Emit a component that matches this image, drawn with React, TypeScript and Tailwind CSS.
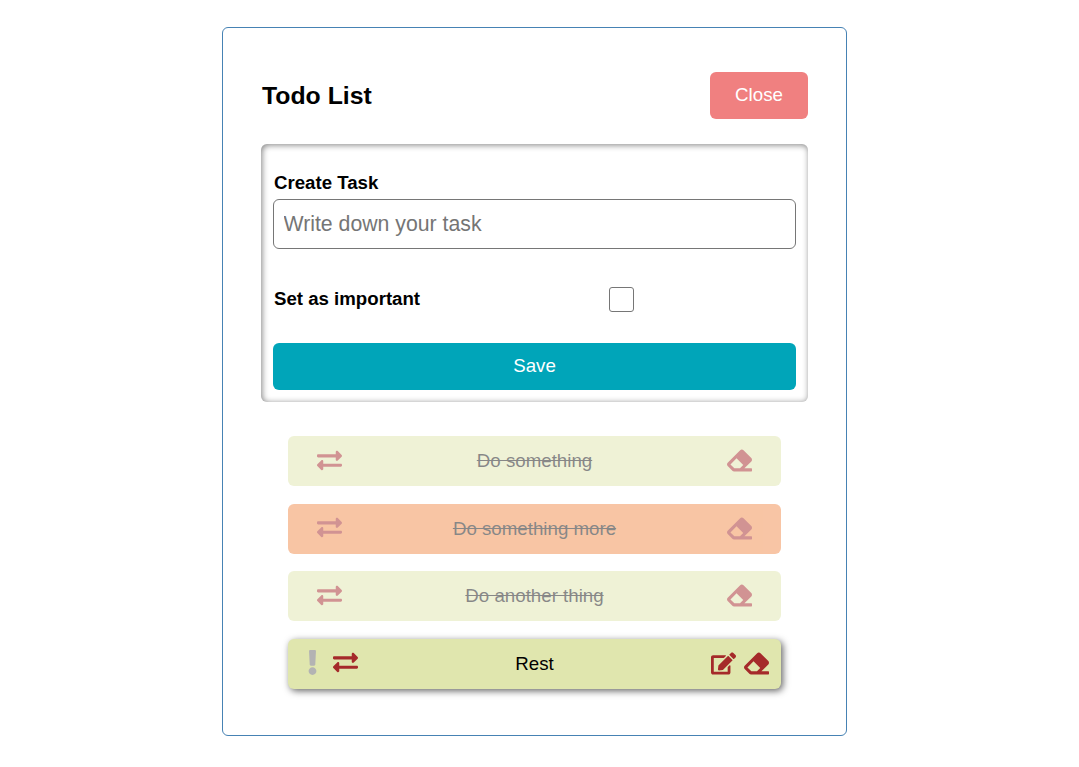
import { FaEdit, FaEraser, FaExchangeAlt, FaExclamation } from "react-icons/fa";

type Task = { name: string; done: boolean; important: boolean };

const tasks: Task[] = [
  { name: "Do something", done: true, important: false },
  { name: "Do something more", done: true, important: true },
  { name: "Do another thing", done: true, important: false },
  { name: "Rest", done: false, important: false },
];

function TaskRow({ task }: { task: Task }) {
  if (task.done) {
    return (
      <li
        className={`flex h-[50px] items-center justify-between rounded-[6px] pr-[29px] pl-[29px] opacity-50 ${
          task.important ? "bg-[#f28c4b]" : "bg-[#e0e6ae]"
        }`}
      >
        <FaExchangeAlt className="mb-[2px] size-[25px] text-[#a52a2a]" />
        <span className="text-[18.72px] leading-[22px] text-[#111111] line-through">{task.name}</span>
        <FaEraser className="mb-px size-[25px] text-[#a52a2a]" />
      </li>
    );
  }
  return (
    <li className="grid h-[50px] grid-cols-[1fr_auto_1fr] items-center rounded-[6px] bg-[#e0e6ae] pr-[12px] pl-[12px] shadow-[2px_2px_7px_#666666]">
      <div className="flex items-center gap-[8px] pb-[3px]">
        <FaExclamation className="size-[25px] text-[#b3b3b3]" />
        <FaExchangeAlt className="size-[25px] text-[#a52a2a]" />
      </div>
      <span className="text-[18.72px] leading-[22px] text-black">{task.name}</span>
      <div className="flex items-center justify-end gap-[8px] pb-[2px]">
        <FaEdit className="size-[25px] text-[#a52a2a]" />
        <FaEraser className="size-[25px] text-[#a52a2a]" />
      </div>
    </li>
  );
}

export default function App() {
  return (
    <main className="flex h-[767px] justify-center overflow-hidden bg-white pt-[27px] pr-[10px] font-['Liberation_Sans',Arial,sans-serif] text-black">
      <section className="h-[709px] w-[625px] rounded-[6px] border border-[#4682b4] px-[38px] pt-[44px]">
        <header className="flex h-[47px] items-center justify-between">
          <h1 className="pl-px text-[24.8px] leading-[28px] font-bold">Todo List</h1>
          <button className="h-[47px] w-[98px] rounded-[6px] bg-[#f08080] pb-px text-[18.72px] text-white">
            Close
          </button>
        </header>
        <form className="mt-[25px] flex h-[258px] flex-col rounded-[6px] px-[12px] pt-[28px] shadow-[inset_1px_1px_6px_#808080]">
          <label htmlFor="task" className="h-[27px] pl-px text-[18.65px] leading-[22px] font-bold">
            Create Task
          </label>
          <input
            id="task"
            placeholder="Write down your task"
            className="h-[50px] w-full shrink-0 rounded-[6px] border border-[#767676] px-[9.5px] text-[21.25px] placeholder:text-[#757575]"
          />
          <div className="mt-[38px] grid h-[25px] grid-cols-[174px_1fr] items-center">
            <label htmlFor="important" className="pb-[2px] pl-px text-[18.65px] leading-[22px] font-bold">
              Set as important
            </label>
            <input
              id="important"
              type="checkbox"
              className="mr-px size-[25px] justify-self-center appearance-none rounded-[3px] border border-[#767676]"
            />
          </div>
          <button
            type="button"
            className="mt-[31px] h-[47px] shrink-0 rounded-[6px] bg-[#00a5b9] pb-px text-[18.72px] text-white"
          >
            Save
          </button>
        </form>
        <ul className="mx-[27px] mt-[34px] flex flex-col gap-[17.7px]">
          {tasks.map((task) => (
            <TaskRow key={task.name} task={task} />
          ))}
        </ul>
      </section>
    </main>
  );
}
